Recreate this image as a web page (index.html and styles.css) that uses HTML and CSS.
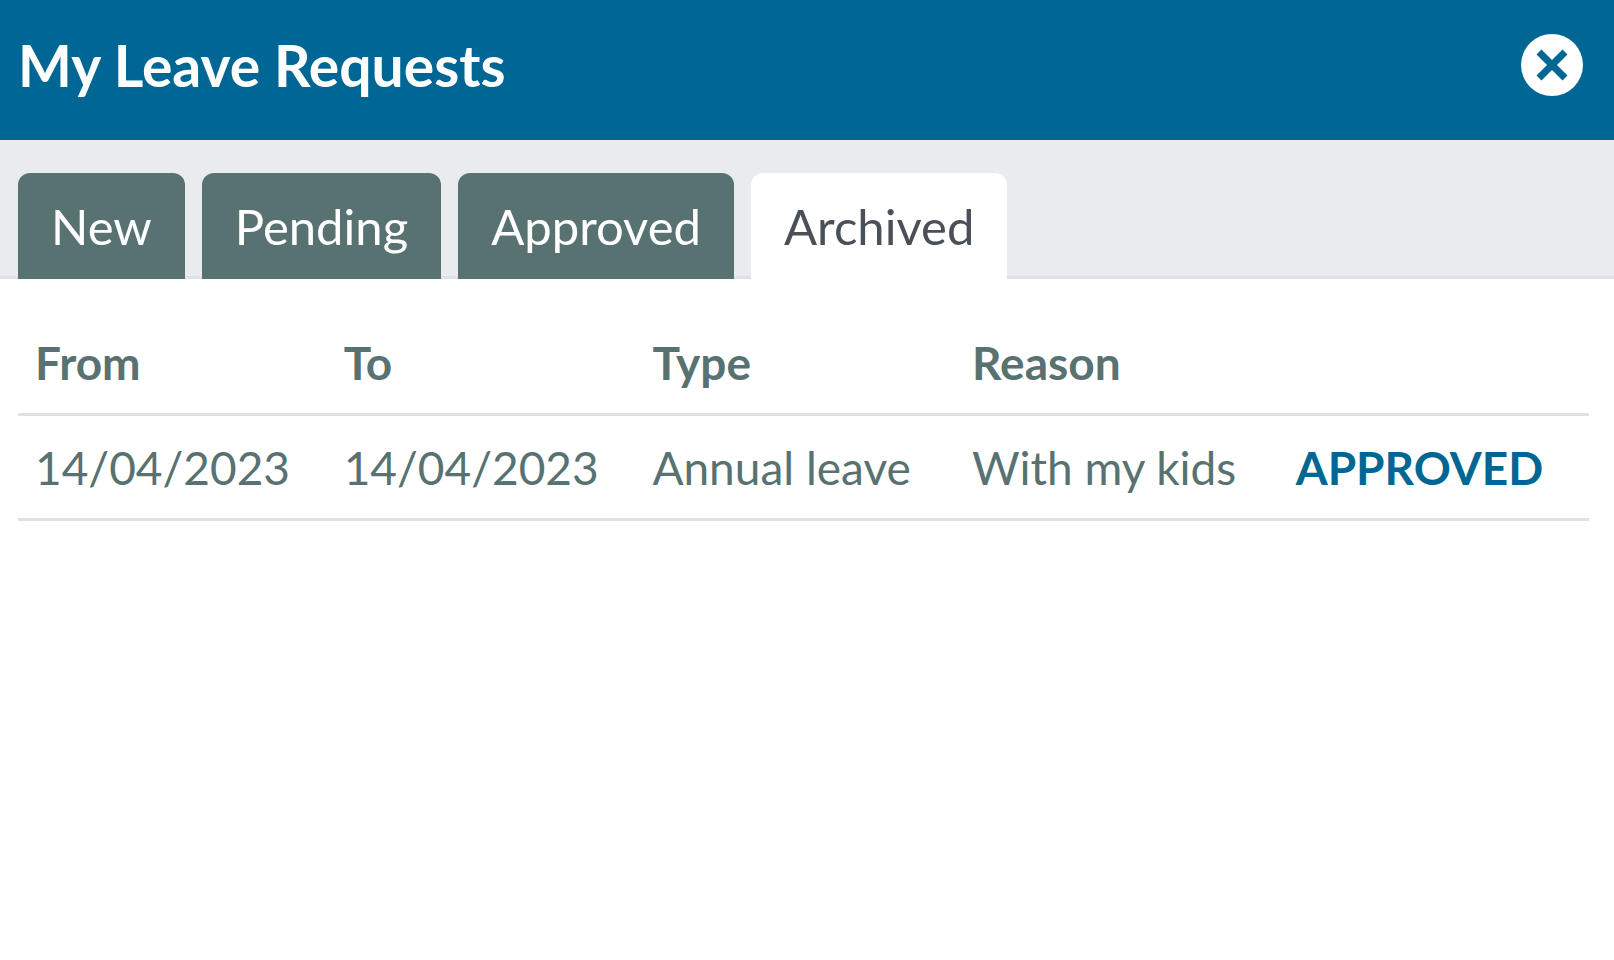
FILE: index.html
```html
<!DOCTYPE html>
<html lang="en">
  <head>
    <meta charset="UTF-8" />
    <meta name="viewport" content="width=device-width, initial-scale=1.0" />
    <title>My Leave Requests</title>
    <link rel="stylesheet" href="styles.css">
  </head>
  <body>
    <header class="header">
      <h1>My Leave Requests</h1>
      <button type="button" class="close" aria-label="Close">
        <svg viewBox="0 0 62 62" aria-hidden="true">
          <circle cx="31" cy="31" r="31" fill="#fff" />
          <path d="M18 18L44 44M44 18L18 44" stroke="#006693" stroke-width="7" />
        </svg>
      </button>
    </header>

    <nav class="tabs">
      <a href="#new" class="tab">New</a>
      <a href="#pending" class="tab">Pending</a>
      <a href="#approved" class="tab">Approved</a>
      <a href="#archived" class="tab active" aria-current="page">Archived</a>
    </nav>

    <main class="content">
      <table class="requests">
        <colgroup>
          <col class="col-date">
          <col class="col-date">
          <col class="col-type">
          <col class="col-reason">
          <col>
        </colgroup>
        <thead>
          <tr>
            <th>From</th>
            <th>To</th>
            <th>Type</th>
            <th>Reason</th>
            <td></td>
          </tr>
        </thead>
        <tbody>
          <tr>
            <td>14/04/2023</td>
            <td>14/04/2023</td>
            <td>Annual leave</td>
            <td>With my kids</td>
            <td class="status">APPROVED</td>
          </tr>
        </tbody>
      </table>
    </main>
  </body>
</html>
```

FILE: styles.css
```css
* {
  box-sizing: border-box;
}

body {
  margin: 0;
  font-family: Lato, "Open Sans", sans-serif;
  font-size: 46px;
  line-height: 72px;
  color: #587272;
  background: #fff;
}

.header {
  display: flex;
  justify-content: space-between;
  align-items: center;
  padding: 29px 31px 39px 18px;
  background: #006693;
}

h1 {
  margin: 0;
  font-size: 57px;
  font-weight: bold;
  color: #fff;
}

.close {
  width: 62px;
  height: 62px;
  padding: 0;
  border: none;
  border-radius: 50%;
  background: none;
  cursor: pointer;
}

.close svg {
  display: block;
}

.tabs {
  display: flex;
  gap: 17px;
  padding: 33px 18px 0;
  background: #e9ebef;
  box-shadow: inset 0 -3px #dee2e6;
}

.tab {
  padding: 17px 33px;
  border-radius: 12px 12px 0 0;
  font-size: 49px;
  color: #fff;
  background: #587272;
  text-decoration: none;
}

.tab.active {
  color: #495057;
  background: #fff;
}

.content {
  padding: 32px 25px 0 18px;
}

.requests {
  width: 100%;
  border-collapse: collapse;
}

.col-date {
  width: 19.65%;
}

.col-type {
  width: 20.35%;
}

.col-reason {
  width: 20.6%;
}

.requests th,
.requests td {
  padding: 16px 17px 14px;
  border-bottom: 3px solid #dee2e6;
  text-align: left;
  white-space: nowrap;
}

.requests .status {
  font-weight: bold;
  color: #006693;
}

@media (max-width: 1100px) {
  body {
    font-size: 16px;
    line-height: 24px;
  }

  h1 {
    font-size: 20px;
  }

  .tab {
    padding: 6px 12px;
    font-size: 17px;
  }

  .requests th,
  .requests td {
    padding: 6px;
  }
}
```
